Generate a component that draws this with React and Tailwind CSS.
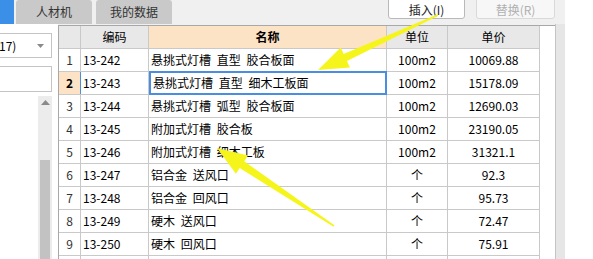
import React from "react";

const rows = [
  { n: 1, code: "13-242", name: "悬挑式灯槽 直型 胶合板面", unit: "100m2", price: "10069.88" },
  { n: 2, code: "13-243", name: "悬挑式灯槽 直型 细木工板面", unit: "100m2", price: "15178.09" },
  { n: 3, code: "13-244", name: "悬挑式灯槽 弧型 胶合板面", unit: "100m2", price: "12690.03" },
  { n: 4, code: "13-245", name: "附加式灯槽 胶合板", unit: "100m2", price: "23190.05" },
  { n: 5, code: "13-246", name: "附加式灯槽 细木工板", unit: "100m2", price: "31321.1" },
  { n: 6, code: "13-247", name: "铝合金 送风口", unit: "个", price: "92.3" },
  { n: 7, code: "13-248", name: "铝合金 回风口", unit: "个", price: "95.73" },
  { n: 8, code: "13-249", name: "硬木 送风口", unit: "个", price: "72.47" },
  { n: 9, code: "13-250", name: "硬木 回风口", unit: "个", price: "75.91" },
  { n: "", code: "", name: "", unit: "", price: "" },
];

// tapered arrow polygon, tail -> tip
function arrowPoints([tx, ty], [px, py], headLen = 28, headHalf = 11, w0 = 0.8, w1 = 3.5) {
  const dx = px - tx;
  const dy = py - ty;
  const len = Math.hypot(dx, dy);
  const ux = dx / len;
  const uy = dy / len;
  const nx = -uy;
  const ny = ux;
  const bx = px - ux * headLen;
  const by = py - uy * headLen;
  const pts = [
    [tx + nx * w0, ty + ny * w0],
    [bx + nx * w1, by + ny * w1],
    [bx + nx * headHalf, by + ny * headHalf],
    [px, py],
    [bx - nx * headHalf, by - ny * headHalf],
    [bx - nx * w1, by - ny * w1],
    [tx - nx * w0, ty - ny * w0],
  ];
  return pts.map((p) => p.map((v) => v.toFixed(1)).join(",")).join(" ");
}

function Row({ r }) {
  const sel = r.n === 2;
  return (
    <div className="flex shrink-0 h-[23px] border-b border-[#c9c9c9]">
      <div
        className={`w-[22px] shrink-0 flex items-center justify-center border-r ${
          sel ? "bg-[#fde3c5] font-bold text-black border-[#4a8fdf]" : "text-[#333] border-[#c9c9c9]"
        }`}
      >
        {r.n}
      </div>
      <div className="w-[68px] shrink-0 flex items-center pl-[2px] border-r border-[#c9c9c9]">{r.code}</div>
      <div
        className={`w-[238px] shrink-0 flex items-center pl-[2px] [word-spacing:3px] ${
          sel ? "border-2 border-[#4a8fdf] -my-px pl-[1px]" : "border-r border-[#c9c9c9]"
        }`}
      >
        {r.name}
      </div>
      <div className="w-[61px] shrink-0 flex items-center justify-center border-r border-[#c9c9c9]">{r.unit}</div>
      <div className="w-[92px] shrink-0 flex items-center justify-center border-r border-[#c9c9c9]">{r.price}</div>
    </div>
  );
}

export default function App() {
  return (
    <div
      className="relative w-[593px] h-[259px] overflow-hidden bg-[#f0f0f0] text-[12px] text-black"
      style={{ fontFamily: '"Noto Sans CJK SC", "Noto Sans", sans-serif' }}
    >
      {/* top bar */}
      <div className="flex h-[24px]">
        <div className="w-[14px] bg-[#3c8fe6]" />
        <div className="ml-[2px] w-[76px] bg-[#c9c9c9] rounded-t-[3px] flex items-center justify-center text-[#333]">
          人材机
        </div>
        <div className="ml-[4px] w-[76px] bg-[#c9c9c9] rounded-t-[3px] flex items-center justify-center text-[#333]">
          我的数据
        </div>
        <div className="ml-[216px] -mt-[4px] h-[23px] w-[77px] bg-white border border-[#b9b9b9] rounded-[3px] flex items-center justify-center pt-[4px] text-[#222]">
          插入(I)
        </div>
        <div className="ml-[11px] -mt-[4px] h-[23px] w-[79px] bg-[#f7f7f7] border border-[#d9d9d9] rounded-[3px] flex items-center justify-center pt-[4px] text-[#b0b0b0]">
          替换(R)
        </div>
        <div className="ml-[10px] flex-1 bg-white" />
      </div>

      {/* body */}
      <div className="flex h-[235px]">
        {/* left panel */}
        <div className="w-[58px] shrink-0 bg-white flex flex-col">
          <div className="mt-[9px] w-[52px] h-[25px] border border-l-0 border-[#c4c4c4] bg-white flex items-center justify-between pr-[7px]">
            <span className="-ml-[1px]">17)</span>
            <svg width="7" height="4" viewBox="0 0 7 4">
              <path d="M0 0h7L3.5 4z" fill="#8a8a8a" />
            </svg>
          </div>
          <div className="mt-[8px] w-[52px] h-[26px] border border-l-0 border-[#c4c4c4] bg-white" />
          <div className="mt-[4px] ml-[38px] w-[14px] flex-1 bg-[#ececec] flex flex-col items-center">
            <svg className="mt-[4px]" width="9" height="5" viewBox="0 0 9 5">
              <path d="M4.5 0L9 5H0z" fill="#8a8a8a" />
            </svg>
            <div className="mt-[55px] w-[10px] flex-1 bg-[#c2c2c2]" />
          </div>
        </div>

        {/* table */}
        <div className="w-[497px] shrink-0 bg-white border-l border-t border-[#a8a8a8] mt-[1px] flex overflow-hidden">
          <div className="w-[481px] shrink-0 flex flex-col">
            <div className="flex shrink-0 h-[23px] border-b border-[#c9c9c9] bg-[#e8e8e8]">
              <div className="w-[22px] shrink-0 border-r border-[#c9c9c9]" />
              <div className="w-[68px] shrink-0 flex items-center justify-center border-r border-[#c9c9c9]">编码</div>
              <div className="w-[238px] shrink-0 flex items-center justify-center border-r border-[#c9c9c9] bg-[#fde3c5] font-bold">
                名称
              </div>
              <div className="w-[61px] shrink-0 flex items-center justify-center border-r border-[#c9c9c9]">单位</div>
              <div className="w-[92px] shrink-0 flex items-center justify-center border-r border-[#c9c9c9]">单价</div>
            </div>
            {rows.map((r, i) => (
              <Row key={i} r={r} />
            ))}
          </div>
          <div className="flex-1 bg-white" />
        </div>

        {/* right */}
        <div className="w-[10px] shrink-0 bg-[#e6e6e6] border-l border-[#c4c4c4]" />
        <div className="flex-1 bg-white" />
      </div>

      {/* annotation arrows */}
      <svg className="absolute inset-0 pointer-events-none" width="593" height="259" viewBox="0 0 593 259">
        <polygon points={arrowPoints([438, 15], [318, 70], 30, 11, 0.8, 4)} fill="#f5f51c" />
        <polygon points={arrowPoints([334, 226], [217, 148], 30, 11, 0.8, 4)} fill="#f5f51c" />
      </svg>
    </div>
  );
}
